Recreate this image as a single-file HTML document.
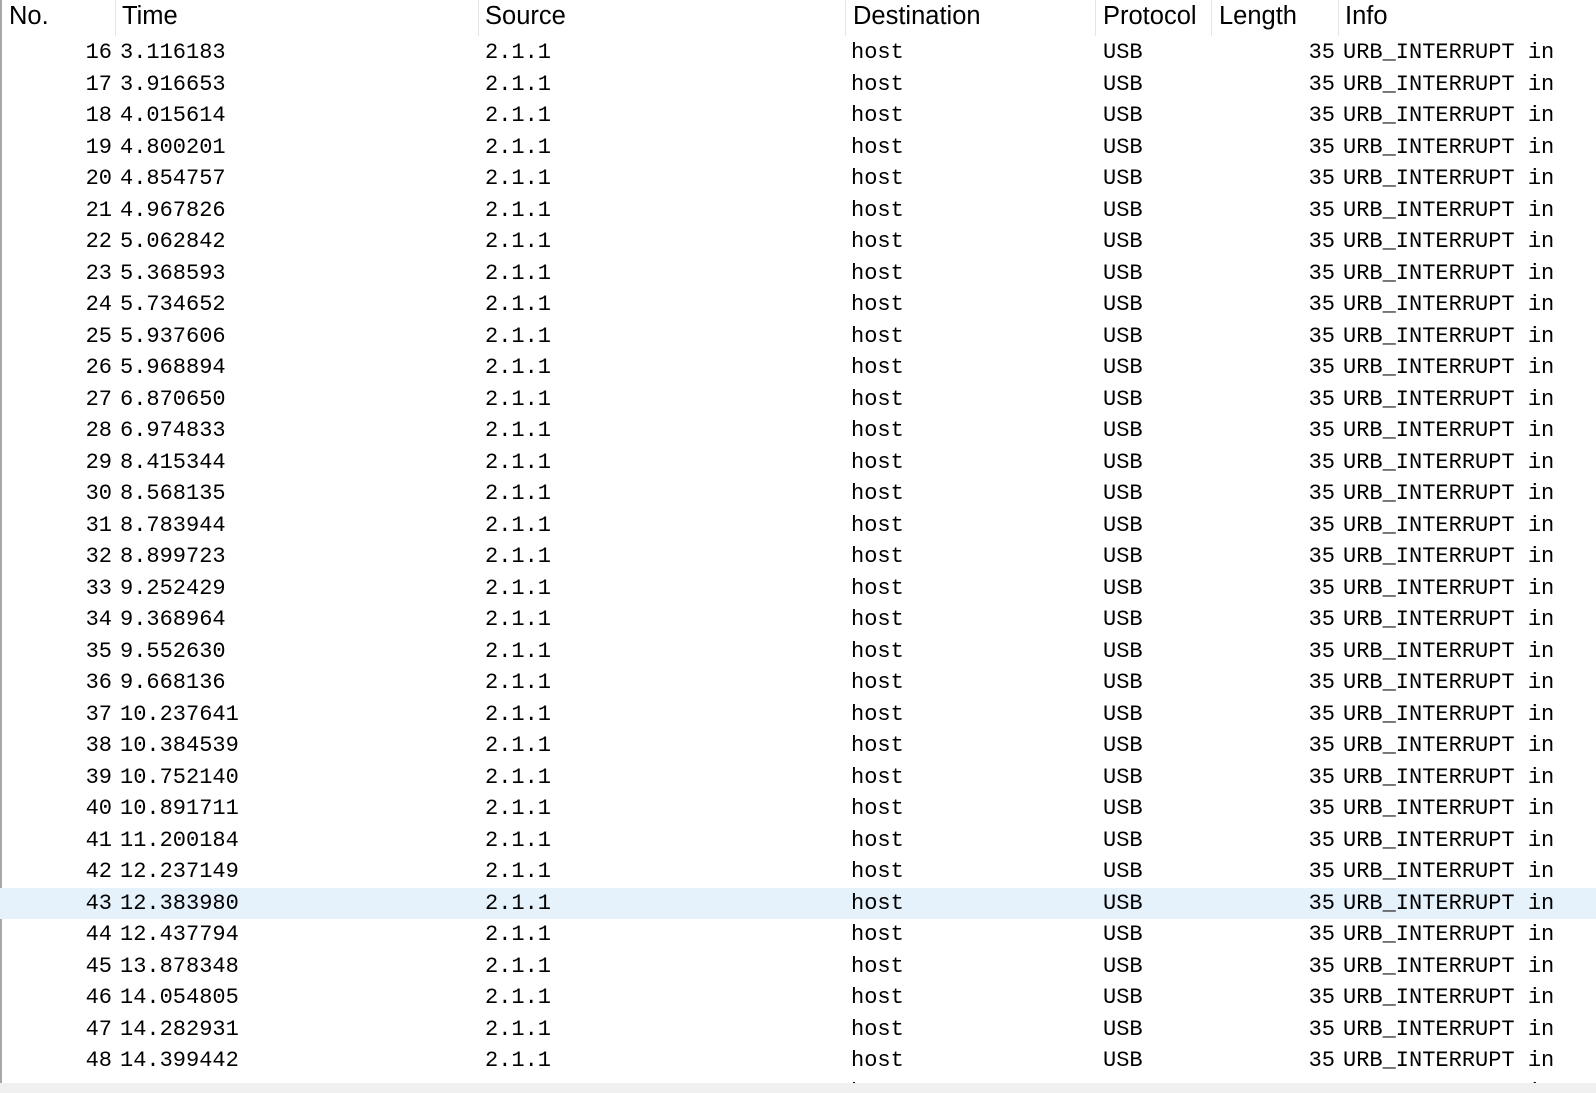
<!DOCTYPE html>
<html><head><meta charset="utf-8"><style>
*{margin:0;padding:0}
body{width:1596px;height:1093px;overflow:hidden;background:#fff;position:relative;font-family:"Liberation Mono",monospace;font-size:22px;color:#000}
#lb{position:absolute;left:0;top:0;width:2px;height:1083px;background:#a7a7ad}
#bot{position:absolute;left:0;top:1083px;width:1596px;height:10px;background:#f0f0f0}
.h{position:absolute;top:1px;height:35px;font-family:"Liberation Sans",sans-serif;font-size:25.5px;line-height:30px}
.sep{position:absolute;top:0;width:1px;height:36px;background:#e5e5e5}
#rows{position:absolute;left:0;top:37px;width:1596px;height:1046px;overflow:hidden}
.r{position:relative;height:31.5px;line-height:31.5px;white-space:pre}
.r span{position:absolute;top:0}
.sel{background:#e5f1fb}
.n{right:1484px;text-align:right}
.t{left:120px}.s{left:485px}.d{left:851px}.p{left:1103px}.l{right:261px}.i{left:1343px}
</style></head><body>
<div id="lb"></div>
<div class="h" style="left:9px">No.</div>
<div class="sep" style="left:115px"></div>
<div class="h" style="left:122px">Time</div>
<div class="sep" style="left:478px"></div>
<div class="h" style="left:485px">Source</div>
<div class="sep" style="left:845px"></div>
<div class="h" style="left:853px">Destination</div>
<div class="sep" style="left:1095px"></div>
<div class="h" style="left:1103px">Protocol</div>
<div class="sep" style="left:1211px"></div>
<div class="h" style="left:1219px">Length</div>
<div class="sep" style="left:1338px"></div>
<div class="h" style="left:1345px">Info</div>
<div id="rows">
<div class="r"><span class="n">16</span><span class="t">3.116183</span><span class="s">2.1.1</span><span class="d">host</span><span class="p">USB</span><span class="l">35</span><span class="i">URB_INTERRUPT in</span></div>
<div class="r"><span class="n">17</span><span class="t">3.916653</span><span class="s">2.1.1</span><span class="d">host</span><span class="p">USB</span><span class="l">35</span><span class="i">URB_INTERRUPT in</span></div>
<div class="r"><span class="n">18</span><span class="t">4.015614</span><span class="s">2.1.1</span><span class="d">host</span><span class="p">USB</span><span class="l">35</span><span class="i">URB_INTERRUPT in</span></div>
<div class="r"><span class="n">19</span><span class="t">4.800201</span><span class="s">2.1.1</span><span class="d">host</span><span class="p">USB</span><span class="l">35</span><span class="i">URB_INTERRUPT in</span></div>
<div class="r"><span class="n">20</span><span class="t">4.854757</span><span class="s">2.1.1</span><span class="d">host</span><span class="p">USB</span><span class="l">35</span><span class="i">URB_INTERRUPT in</span></div>
<div class="r"><span class="n">21</span><span class="t">4.967826</span><span class="s">2.1.1</span><span class="d">host</span><span class="p">USB</span><span class="l">35</span><span class="i">URB_INTERRUPT in</span></div>
<div class="r"><span class="n">22</span><span class="t">5.062842</span><span class="s">2.1.1</span><span class="d">host</span><span class="p">USB</span><span class="l">35</span><span class="i">URB_INTERRUPT in</span></div>
<div class="r"><span class="n">23</span><span class="t">5.368593</span><span class="s">2.1.1</span><span class="d">host</span><span class="p">USB</span><span class="l">35</span><span class="i">URB_INTERRUPT in</span></div>
<div class="r"><span class="n">24</span><span class="t">5.734652</span><span class="s">2.1.1</span><span class="d">host</span><span class="p">USB</span><span class="l">35</span><span class="i">URB_INTERRUPT in</span></div>
<div class="r"><span class="n">25</span><span class="t">5.937606</span><span class="s">2.1.1</span><span class="d">host</span><span class="p">USB</span><span class="l">35</span><span class="i">URB_INTERRUPT in</span></div>
<div class="r"><span class="n">26</span><span class="t">5.968894</span><span class="s">2.1.1</span><span class="d">host</span><span class="p">USB</span><span class="l">35</span><span class="i">URB_INTERRUPT in</span></div>
<div class="r"><span class="n">27</span><span class="t">6.870650</span><span class="s">2.1.1</span><span class="d">host</span><span class="p">USB</span><span class="l">35</span><span class="i">URB_INTERRUPT in</span></div>
<div class="r"><span class="n">28</span><span class="t">6.974833</span><span class="s">2.1.1</span><span class="d">host</span><span class="p">USB</span><span class="l">35</span><span class="i">URB_INTERRUPT in</span></div>
<div class="r"><span class="n">29</span><span class="t">8.415344</span><span class="s">2.1.1</span><span class="d">host</span><span class="p">USB</span><span class="l">35</span><span class="i">URB_INTERRUPT in</span></div>
<div class="r"><span class="n">30</span><span class="t">8.568135</span><span class="s">2.1.1</span><span class="d">host</span><span class="p">USB</span><span class="l">35</span><span class="i">URB_INTERRUPT in</span></div>
<div class="r"><span class="n">31</span><span class="t">8.783944</span><span class="s">2.1.1</span><span class="d">host</span><span class="p">USB</span><span class="l">35</span><span class="i">URB_INTERRUPT in</span></div>
<div class="r"><span class="n">32</span><span class="t">8.899723</span><span class="s">2.1.1</span><span class="d">host</span><span class="p">USB</span><span class="l">35</span><span class="i">URB_INTERRUPT in</span></div>
<div class="r"><span class="n">33</span><span class="t">9.252429</span><span class="s">2.1.1</span><span class="d">host</span><span class="p">USB</span><span class="l">35</span><span class="i">URB_INTERRUPT in</span></div>
<div class="r"><span class="n">34</span><span class="t">9.368964</span><span class="s">2.1.1</span><span class="d">host</span><span class="p">USB</span><span class="l">35</span><span class="i">URB_INTERRUPT in</span></div>
<div class="r"><span class="n">35</span><span class="t">9.552630</span><span class="s">2.1.1</span><span class="d">host</span><span class="p">USB</span><span class="l">35</span><span class="i">URB_INTERRUPT in</span></div>
<div class="r"><span class="n">36</span><span class="t">9.668136</span><span class="s">2.1.1</span><span class="d">host</span><span class="p">USB</span><span class="l">35</span><span class="i">URB_INTERRUPT in</span></div>
<div class="r"><span class="n">37</span><span class="t">10.237641</span><span class="s">2.1.1</span><span class="d">host</span><span class="p">USB</span><span class="l">35</span><span class="i">URB_INTERRUPT in</span></div>
<div class="r"><span class="n">38</span><span class="t">10.384539</span><span class="s">2.1.1</span><span class="d">host</span><span class="p">USB</span><span class="l">35</span><span class="i">URB_INTERRUPT in</span></div>
<div class="r"><span class="n">39</span><span class="t">10.752140</span><span class="s">2.1.1</span><span class="d">host</span><span class="p">USB</span><span class="l">35</span><span class="i">URB_INTERRUPT in</span></div>
<div class="r"><span class="n">40</span><span class="t">10.891711</span><span class="s">2.1.1</span><span class="d">host</span><span class="p">USB</span><span class="l">35</span><span class="i">URB_INTERRUPT in</span></div>
<div class="r"><span class="n">41</span><span class="t">11.200184</span><span class="s">2.1.1</span><span class="d">host</span><span class="p">USB</span><span class="l">35</span><span class="i">URB_INTERRUPT in</span></div>
<div class="r"><span class="n">42</span><span class="t">12.237149</span><span class="s">2.1.1</span><span class="d">host</span><span class="p">USB</span><span class="l">35</span><span class="i">URB_INTERRUPT in</span></div>
<div class="r sel"><span class="n">43</span><span class="t">12.383980</span><span class="s">2.1.1</span><span class="d">host</span><span class="p">USB</span><span class="l">35</span><span class="i">URB_INTERRUPT in</span></div>
<div class="r"><span class="n">44</span><span class="t">12.437794</span><span class="s">2.1.1</span><span class="d">host</span><span class="p">USB</span><span class="l">35</span><span class="i">URB_INTERRUPT in</span></div>
<div class="r"><span class="n">45</span><span class="t">13.878348</span><span class="s">2.1.1</span><span class="d">host</span><span class="p">USB</span><span class="l">35</span><span class="i">URB_INTERRUPT in</span></div>
<div class="r"><span class="n">46</span><span class="t">14.054805</span><span class="s">2.1.1</span><span class="d">host</span><span class="p">USB</span><span class="l">35</span><span class="i">URB_INTERRUPT in</span></div>
<div class="r"><span class="n">47</span><span class="t">14.282931</span><span class="s">2.1.1</span><span class="d">host</span><span class="p">USB</span><span class="l">35</span><span class="i">URB_INTERRUPT in</span></div>
<div class="r"><span class="n">48</span><span class="t">14.399442</span><span class="s">2.1.1</span><span class="d">host</span><span class="p">USB</span><span class="l">35</span><span class="i">URB_INTERRUPT in</span></div>
<div class="r"><span class="n">49</span><span class="t">14.512033</span><span class="s">2.1.1</span><span class="d">host</span><span class="p">USB</span><span class="l">35</span><span class="i">URB_INTERRUPT in</span></div>
</div>
<div id="bot"></div>
</body></html>
